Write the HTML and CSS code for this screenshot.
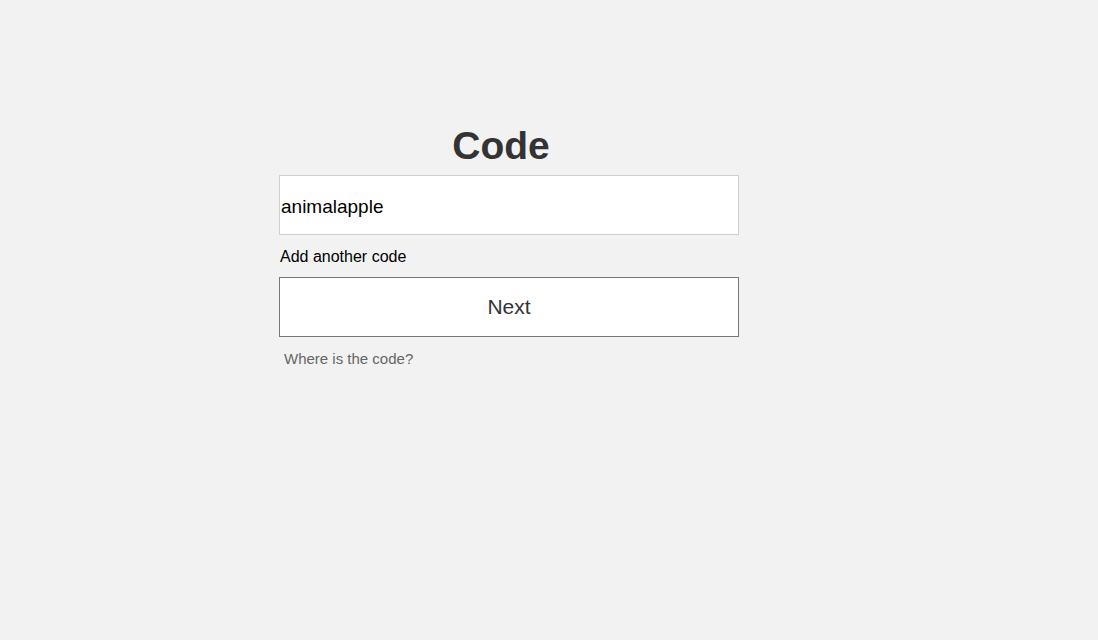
FILE: index.html
```html
<!DOCTYPE html>
<html>
<head>
<meta charset="utf-8">
<link rel="stylesheet" href="styles.css">
</head>
<body>
<main class="page">
  <form class="code-form">
    <h1 class="title">Code</h1>
    <div class="code-input">animalapple</div>
    <div class="add-link">Add another code</div>
    <div class="next-btn">Next</div>
    <div class="help-link">Where is the code?</div>
  </form>
</main>
</body>
</html>
```
FILE: styles.css
```css
html, body {
  margin: 0;
  padding: 0;
  background: #f2f2f2;
}
body {
  font-family: "Liberation Sans", Arial, sans-serif;
  width: 1098px;
  height: 640px;
  overflow: hidden;
}
.page {
  padding: 124px 0 0 279px;
}
.code-form {
  width: 460px;
  display: flex;
  flex-direction: column;
}
.title {
  margin: 0 16px 7px 0;
  font-size: 39px;
  line-height: 44px;
  font-weight: bold;
  color: #333;
  text-align: center;
}
.code-input {
  box-sizing: border-box;
  height: 60px;
  background: #fff;
  border: 1px solid #cfcfcf;
  display: flex;
  align-items: center;
  padding: 3px 0 0 1px;
  font-size: 19px;
  color: #000;
}
.add-link {
  margin: 12px 0 0 1px;
  font-size: 16px;
  line-height: 20px;
  color: #000;
}
.next-btn {
  box-sizing: border-box;
  margin-top: 10px;
  height: 60px;
  background: #fff;
  border: 1px solid #777;
  display: flex;
  align-items: center;
  justify-content: center;
  font-size: 21px;
  color: #333;
}
.help-link {
  margin: 13px 0 0 5px;
  font-size: 15px;
  line-height: 18px;
  color: #666;
}
```
